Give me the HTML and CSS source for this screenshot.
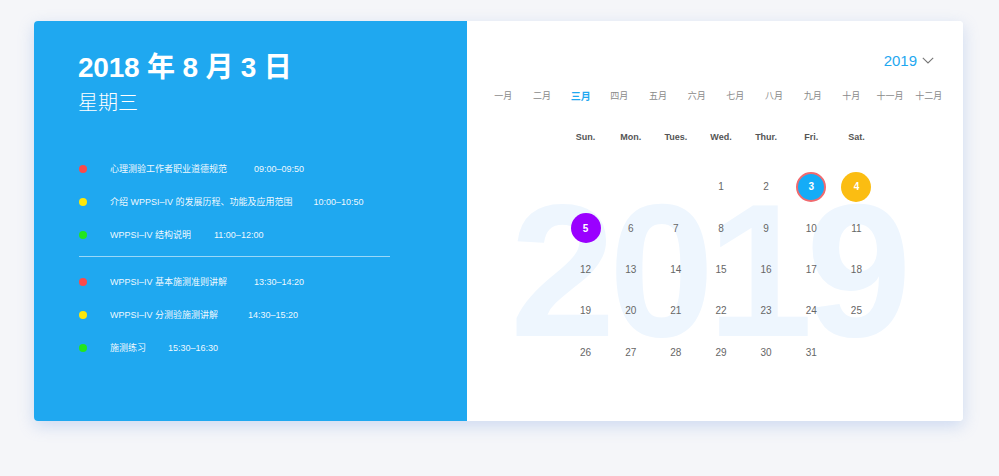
FILE: index.html
```html
<!DOCTYPE html>
<html lang="zh">
<head>
<meta charset="utf-8">
<title>Calendar</title>
<link rel="stylesheet" href="styles.css">
</head>
<body>
<div class="card">
  <section class="left">
    <h1 class="date-title">2018 年 8 月 3 日</h1>
    <div class="weekday">星期三</div>
    <ul class="agenda">
      <li class="item"><span class="dot red"></span><span class="title">心理测验工作者职业道德规范</span><span class="time gap-27">09:00–09:50</span></li>
      <li class="item"><span class="dot yellow"></span><span class="title">介绍 WPPSI–IV 的发展历程、功能及应用范围</span><span class="time gap-21">10:00–10:50</span></li>
      <li class="item"><span class="dot green"></span><span class="title">WPPSI–IV 结构说明</span><span class="time gap-23">11:00–12:00</span></li>
    </ul>
    <div class="divider"></div>
    <ul class="agenda second">
      <li class="item"><span class="dot red"></span><span class="title">WPPSI–IV 基本施测准则讲解</span><span class="time gap-27">13:30–14:20</span></li>
      <li class="item"><span class="dot yellow"></span><span class="title">WPPSI–IV 分测验施测讲解</span><span class="time gap-30">14:30–15:20</span></li>
      <li class="item"><span class="dot green"></span><span class="title">施测练习</span><span class="time gap-22">15:30–16:30</span></li>
    </ul>
  </section>
  <section class="right">
    <div class="watermark">2019</div>
    <div class="year-row">
      <span class="year">2019</span>
      <svg class="chevron" width="12" height="7" viewBox="0 0 12 7"><path d="M0.8 0.8 L6 6 L11.2 0.8" fill="none" stroke="#777" stroke-width="1.1"/></svg>
    </div>
    <div class="months">
      <span>一月</span><span>二月</span><span class="active">三月</span><span>四月</span><span>五月</span><span>六月</span><span>七月</span><span>八月</span><span>九月</span><span>十月</span><span>十一月</span><span>十二月</span>
    </div>
    <div class="weekdays">
      <span>Sun.</span><span>Mon.</span><span>Tues.</span><span>Wed.</span><span>Thur.</span><span>Fri.</span><span>Sat.</span>
    </div>
    <div class="days">
      <span></span><span></span><span></span><span>1</span><span>2</span><span><b class="mark blue">3</b></span><span><b class="mark gold">4</b></span>
      <span><b class="mark purple">5</b></span><span>6</span><span>7</span><span>8</span><span>9</span><span>10</span><span>11</span>
      <span>12</span><span>13</span><span>14</span><span>15</span><span>16</span><span>17</span><span>18</span>
      <span>19</span><span>20</span><span>21</span><span>22</span><span>23</span><span>24</span><span>25</span>
      <span>26</span><span>27</span><span>28</span><span>29</span><span>30</span><span>31</span><span></span>
    </div>
  </section>
</div>
</body>
</html>
```
FILE: styles.css
```css
* { box-sizing: border-box; }
html, body { margin: 0; padding: 0; }
body {
  background: #f5f6f9;
  font-family: "Liberation Sans", "Noto Sans CJK SC", sans-serif;
  width: 999px;
  height: 476px;
  overflow: hidden;
  padding: 21px 0 0 34px;
}
.card {
  width: 929px;
  height: 400px;
  display: flex;
  border-radius: 4px;
  background: #fff;
  box-shadow: 0 5px 16px rgba(120, 160, 225, 0.32);
  overflow: hidden;
}
.left {
  width: 433px;
  background: #1fa8f0;
  color: #fff;
  padding: 30px 0 0 44px;
}
.date-title {
  margin: 0;
  font-size: 28px;
  line-height: 34px;
  font-weight: bold;
  letter-spacing: -0.2px;
}
.weekday {
  margin-top: 5px;
  font-size: 20px;
  line-height: 26px;
  font-weight: 300;
}
.agenda {
  list-style: none;
  margin: 36px 0 0 1px;
  padding: 0;
}
.agenda.second { margin-top: 8px; }
.item {
  height: 33px;
  display: flex;
  align-items: center;
  font-size: 9px;
  color: rgba(255,255,255,0.95);
}
.dot {
  width: 8px;
  height: 8px;
  border-radius: 50%;
  margin-right: 23px;
  flex: none;
}
.dot.red { background: #fb4a4a; }
.dot.yellow { background: #fde70a; }
.dot.green { background: #22e61e; }
.time { margin-left: 23px; }
.time.gap-21 { margin-left: 21px; }
.time.gap-22 { margin-left: 22px; }
.time.gap-23 { margin-left: 23px; }
.time.gap-27 { margin-left: 27px; }
.time.gap-30 { margin-left: 30px; }
.divider {
  margin: 5px 0 0 1px;
  width: 311px;
  height: 1px;
  background: rgba(255,255,255,0.55);
}
.right {
  width: 496px;
  position: relative;
  background: #fff;
}
.watermark {
  position: absolute;
  left: 43px;
  top: 154px;
  font-size: 190px;
  line-height: 1;
  font-weight: bold;
  letter-spacing: -7px;
  color: #eef6fe;
  z-index: 0;
}
.year-row, .months, .weekdays, .days { position: relative; z-index: 1; }
.year-row {
  margin-top: 29px;
  height: 20px;
  display: flex;
  justify-content: flex-end;
  align-items: center;
  padding-right: 29px;
  gap: 5px;
}
.year {
  font-size: 15px;
  color: #1fa8f0;
}
.chevron { margin-top: 1px; }
.months {
  margin-top: 15px;
  height: 20px;
  padding: 0 15px 0 17px;
  display: grid;
  grid-template-columns: repeat(12, 1fr);
  align-items: center;
  text-align: center;
  font-size: 9px;
  color: #8a8a8a;
}
.months .active {
  font-size: 10px;
  font-weight: bold;
  color: #1fa8f0;
}
.weekdays {
  margin: 22px 0 0 96px;
  width: 316px;
  height: 20px;
  display: grid;
  grid-template-columns: repeat(7, 1fr);
  align-items: center;
  text-align: center;
  font-size: 9px;
  font-weight: bold;
  color: #555;
}
.days {
  margin: 19px 0 0 96px;
  width: 316px;
  display: grid;
  grid-template-columns: repeat(7, 1fr);
  grid-auto-rows: 41.4px;
  align-items: center;
  justify-items: center;
  font-size: 10px;
  color: #666;
}
.days span {
  display: flex;
  align-items: center;
  justify-content: center;
}
.mark {
  width: 30px;
  height: 30px;
  border-radius: 50%;
  display: flex;
  align-items: center;
  justify-content: center;
  color: #fff;
  font-weight: bold;
  font-size: 10px;
}
.mark.blue { background: #14acf7; border: 2px solid #f06a6f; }
.mark.gold { background: #fbbd12; }
.mark.purple { background: #9a00ff; }
```
